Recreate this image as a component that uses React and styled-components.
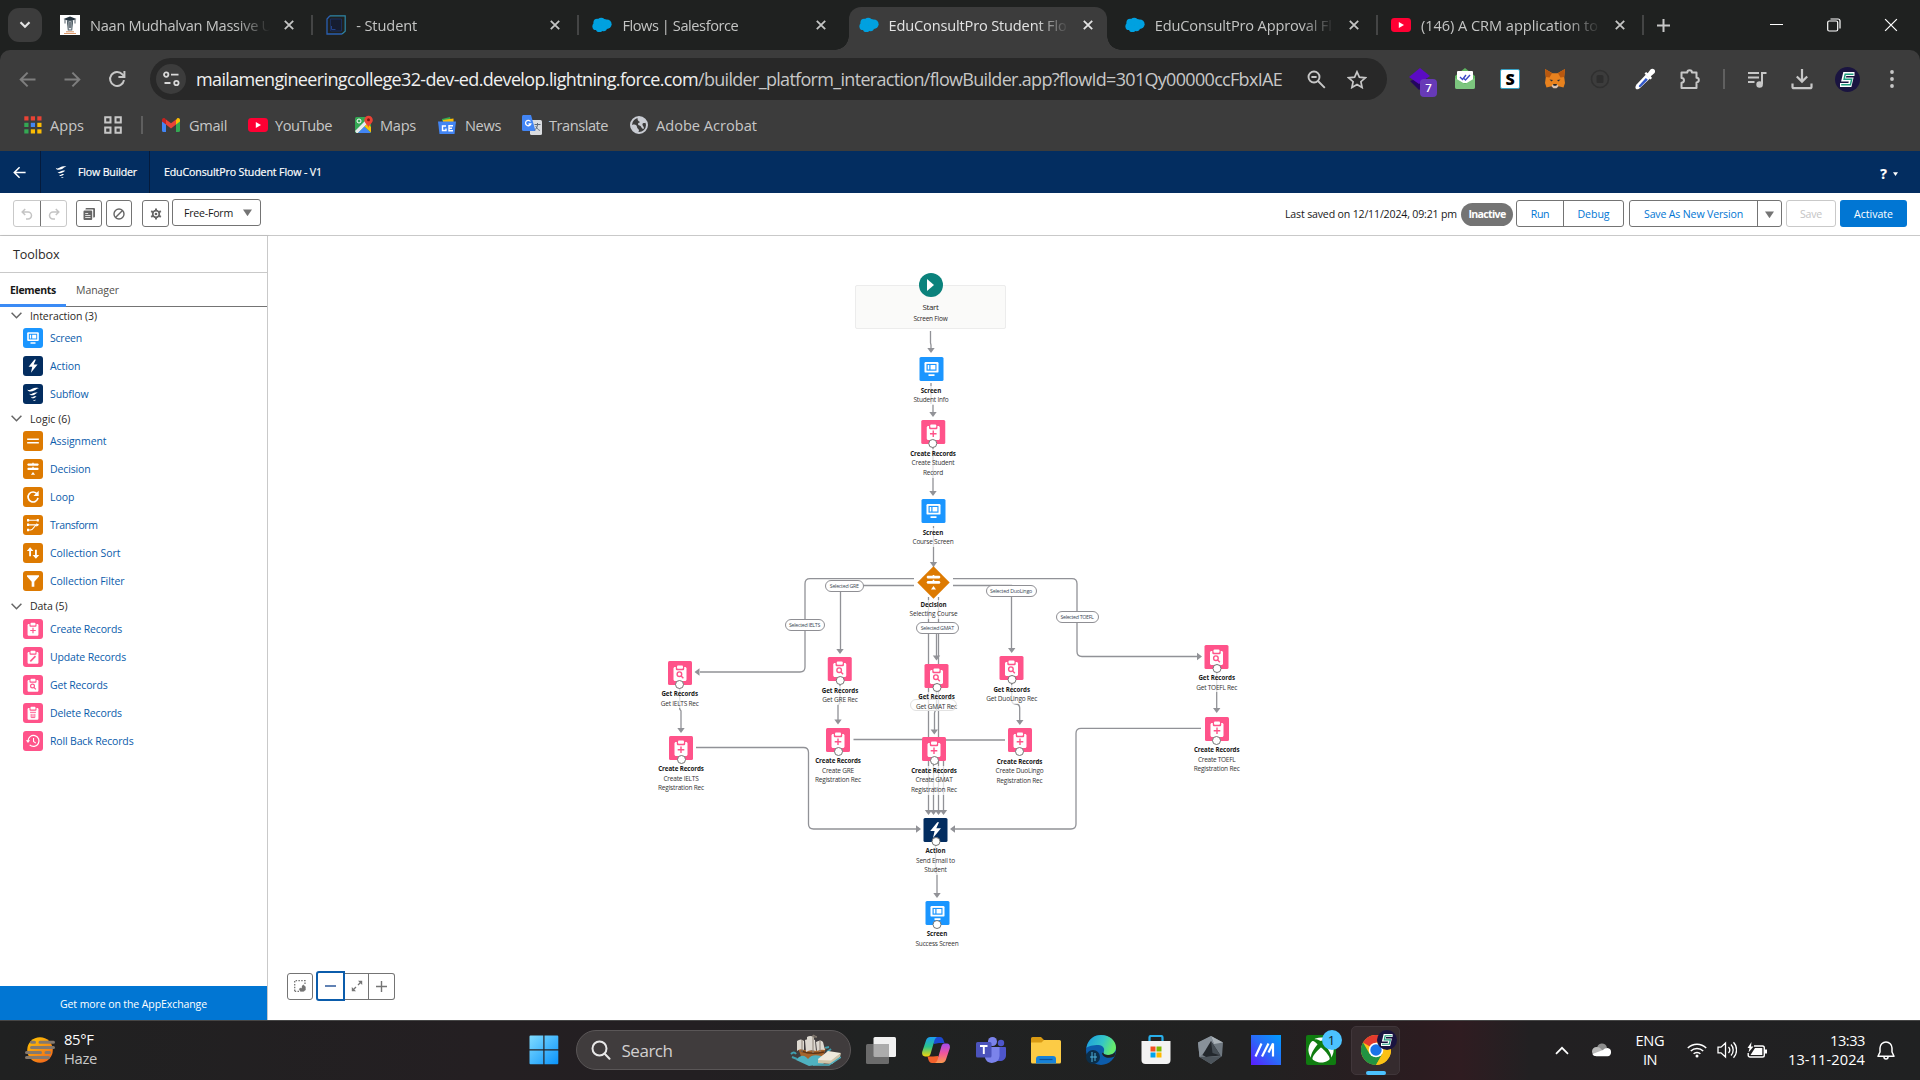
import React, { useLayoutEffect, useRef, useState } from "react";
import styled, { createGlobalStyle, css } from "styled-components";
import { FaXbox } from "react-icons/fa";

const GlobalStyle = createGlobalStyle`
  *, *::before, *::after { box-sizing: border-box; }
  html, body { margin: 0; padding: 0; overflow: hidden; background: #fff; }
  body { font-family: "Open Sans", "Noto Sans", sans-serif; }
  svg { display: block; flex: none; }
`;

/* ---------- text set to a fixed measure ---------- */

const FitText = styled.span`
  display: block;
  flex: none;
  white-space: pre;
  width: max-content;
`;

/* Spreads or tightens the letters so a label takes exactly `w` pixels. */
function Fit({ w, children }) {
  const ref = useRef(null);
  const [spacing, setSpacing] = useState(0);
  useLayoutEffect(() => {
    const natural = ref.current.getBoundingClientRect().width;
    if (w) setSpacing((w - natural) / String(children).length);
  }, [w, children]);
  return (
    <FitText ref={ref} style={{ letterSpacing: `${spacing}px` }}>
      {children}
    </FitText>
  );
}

/* ---------- page ---------- */

const Page = styled.div`
  width: 1920px;
  height: 1080px;
  display: flex;
  flex-direction: column;
  overflow: hidden;
`;

/* ---------- browser chrome ---------- */

const TabStrip = styled.div`
  height: 50px;
  flex: none;
  display: flex;
  background: #1f2120;
  color: #c7c7c7;
`;

const TabSearch = styled.div`
  width: 34px;
  height: 34px;
  margin: 8px 4px 0 8px;
  border-radius: 11px;
  background: #3c3c3c;
  display: grid;
  place-items: center;
`;

const Tab = styled.div`
  width: 266.2px;
  height: 50px;
  padding: 0 0 0 14px;
  display: flex;
  align-items: center;
  position: relative;
  font-size: 14.6px;
  color: ${(p) => (p.$active ? "#e3e3e3" : "#c4c5c4")};
  ${(p) =>
    p.$divider &&
    css`
      &::after {
        content: "";
        position: absolute;
        right: -1px;
        top: 15px;
        width: 2px;
        height: 20px;
        background: #444545;
      }
    `}
  ${(p) =>
    p.$active &&
    css`
      &::before {
        content: "";
        position: absolute;
        left: 4px;
        right: 4px;
        top: 7px;
        bottom: 0;
        border-radius: 12px 12px 0 0;
        background: #3c3c3c;
      }
    `}
`;

const TabFoot = styled.i`
  position: absolute;
  bottom: 0;
  width: 14px;
  height: 14px;
  ${(p) =>
    p.$left
      ? "left: -10px; background: radial-gradient(circle at 0 0, transparent 13.5px, #3c3c3c 14px);"
      : "right: -10px; background: radial-gradient(circle at 100% 0, transparent 13.5px, #3c3c3c 14px);"}
`;

const TabIcon = styled.span`
  position: relative;
  width: 20px;
  height: 20px;
  margin-right: 10px;
`;

const TabTitle = styled.div`
  position: relative;
  width: 184px;
  overflow: hidden;
  mask-image: linear-gradient(90deg, #000 146px, transparent 180px);
`;

const TabClose = styled.span`
  position: relative;
  width: 20px;
  margin-left: 5px;
  display: grid;
  place-items: center;
`;

const NewTab = styled.div`
  width: 40px;
  display: grid;
  place-items: center;
`;

const WindowButtons = styled.div`
  margin-left: auto;
  display: flex;
`;

const WindowButton = styled.div`
  width: 57.5px;
  display: grid;
  place-items: center;
`;

const BrowserTop = styled.div`
  height: 101px;
  flex: none;
  background: #1f2120;
`;

const BrowserPanel = styled.div`
  height: 101px;
  background: #3c3c3c;
  border-radius: 10px 10px 0 0;
  color: #c7c7c7;
`;

const NavRow = styled.div`
  height: 58px;
  display: flex;
  align-items: center;
  padding-left: 4.5px;
`;

const NavSlot = styled.div`
  width: 45px;
  height: 42px;
  flex: none;
  display: grid;
  place-items: center;
`;

const Omnibox = styled.div`
  width: 1237px;
  height: 42px;
  margin: 0 10.5px 0 10.5px;
  border-radius: 21px;
  background: #282828;
  display: flex;
  align-items: center;
  padding-left: 6px;
  font-size: 18px;
`;

const SiteInfo = styled.div`
  width: 30px;
  height: 30px;
  border-radius: 50%;
  background: #3c3c3c;
  display: grid;
  place-items: center;
  margin-right: 10px;
`;

const UrlHost = styled.span`
  color: #f0f0f0;
`;

const UrlPath = styled.span`
  color: #c7c7c7;
  margin-right: 14px;
`;

const OmniIcon = styled.span`
  width: 40.5px;
  display: grid;
  place-items: center;
`;

const ToolDivider = styled.div`
  width: 22px;
  display: grid;
  place-items: center;
  &::before {
    content: "";
    width: 2px;
    height: 20px;
    background: #606060;
  }
`;

const BookmarkRow = styled.div`
  height: 43px;
  padding: 0 0 9px 24px;
  display: flex;
  align-items: center;
  font-size: 14.6px;
`;

const Bookmark = styled.div`
  margin-left: ${(p) => p.$ml}px;
  display: flex;
  align-items: center;
  gap: ${(p) => p.$gap}px;
`;

const BookmarkDivider = styled.div`
  width: 2px;
  height: 18px;
  margin-left: 19px;
  background: #5f5f5f;
`;

/* ---------- flow builder ---------- */

const BuilderHeader = styled.header`
  height: 42px;
  flex: none;
  display: flex;
  background: #032d60;
  color: #fff;
  font-size: 10.6px;
  -webkit-text-stroke: 0.2px;
`;

const HeaderCell = styled.div`
  width: ${(p) => p.$w}px;
  display: flex;
  align-items: center;
  padding-left: ${(p) => p.$pad}px;
  gap: ${(p) => p.$gap || 0}px;
  border-right: 1px solid #051b3c;
`;

const HeaderTitle = styled.div`
  display: flex;
  align-items: center;
  padding-left: 14px;
`;

const HelpMenu = styled.div`
  margin-left: auto;
  margin-right: 22px;
  display: flex;
  align-items: center;
  gap: 6px;
  padding-top: 3px;
  font-size: 14px;
  font-weight: 700;
`;

const BuilderBar = styled.div`
  height: 43px;
  flex: none;
  display: flex;
  align-items: flex-start;
  padding: 7px 13px 0;
  background: #fff;
  border-bottom: 1px solid #c9c9c9;
  font-size: 10.6px;
  color: #181818;
`;

const ButtonGroup = styled.div`
  height: 27px;
  margin-left: ${(p) => p.$ml || 0}px;
  display: flex;
  border: 1px solid ${(p) => (p.$muted ? "#c9c9c9" : "#747474")};
  border-radius: 3px;
  background: #fff;
`;

const GroupButton = styled.div`
  width: ${(p) => p.$w}px;
  padding-top: ${(p) => p.$drop || 0}px;
  display: grid;
  place-items: center;
  color: ${(p) => p.$color || "#0176d3"};
  & + & {
    border-left: 1px solid ${(p) => (p.$muted ? "#c9c9c9" : "#747474")};
  }
`;

const ModeSelect = styled.div`
  width: 89px;
  height: 27px;
  margin: -1px 0 0 3px;
  padding: 0 8px 0 11px;
  display: flex;
  align-items: center;
  justify-content: space-between;
  border: 1px solid #747474;
  border-radius: 3px;
`;

const SavedInfo = styled.div`
  height: 28px;
  margin-left: auto;
  display: flex;
  align-items: center;
  gap: 4px;
`;

const StatusPill = styled.span`
  width: 52px;
  height: 23px;
  border-radius: 12px;
  background: #747474;
  color: #fff;
  font-weight: 700;
  display: grid;
  place-items: center;
`;

const ActivateButton = styled.div`
  width: 67px;
  height: 27px;
  margin-left: 4px;
  border-radius: 3px;
  background: #0176d3;
  color: #fff;
  display: grid;
  place-items: center;
`;

const Workspace = styled.div`
  height: 784px;
  flex: none;
  display: flex;
`;

const Toolbox = styled.aside`
  width: 268px;
  display: flex;
  flex-direction: column;
  border-right: 1px solid #c9c9c9;
  box-shadow: 1px 0 2px rgba(0, 0, 0, 0.16);
  font-size: 10.5px;
  color: #2b2826;
`;

const ToolboxTitle = styled.div`
  height: 37px;
  padding: 1px 0 0 13px;
  display: flex;
  align-items: center;
  border-bottom: 1px solid #c9c9c9;
  font-size: 12.6px;
`;

const ToolboxTabs = styled.div`
  height: 34px;
  display: flex;
  border-bottom: 1px solid #747474;
`;

const ToolboxTab = styled.div`
  height: 34px;
  padding: 0 10px;
  display: flex;
  align-items: center;
  color: ${(p) => (p.$active ? "#181818" : "#514f4d")};
  font-weight: ${(p) => (p.$active ? 700 : 400)};
  border-bottom: ${(p) => (p.$active ? "3px solid #3b8bf5" : "none")};
  border-top: ${(p) => (p.$active ? "3px solid transparent" : "none")};
`;

const ToolGroup = styled.div`
  padding-bottom: ${(p) => p.$pb}px;
`;

const GroupHeader = styled.div`
  height: 17px;
  padding-left: 11px;
  display: flex;
  align-items: center;
  gap: 8px;
`;

const ToolItem = styled.div`
  height: 28px;
  padding-left: 23px;
  display: flex;
  align-items: center;
  gap: 7px;
  color: #0b5cab;
`;

const IconTile = styled.span`
  width: ${(p) => p.$size}px;
  height: ${(p) => p.$size}px;
  flex: none;
  border-radius: ${(p) => (p.$size > 22 ? 1.5 : 3)}px;
  background: ${(p) => p.$bg};
  color: ${(p) => p.$bg};
`;

const ExchangeBar = styled.div`
  height: 34px;
  padding-top: 2px;
  margin-top: auto;
  background: #0176d3;
  color: #fff;
  display: grid;
  place-items: center;
`;

const Canvas = styled.main`
  width: 1652px;
  position: relative;
  background: #fff;
`;

const Edges = styled.svg`
  position: absolute;
  inset: 0;
`;

const StartCard = styled.div`
  position: absolute;
  left: 587px;
  top: 49px;
  width: 151px;
  height: 43.5px;
  border: 1px solid #ececec;
  border-radius: 2px;
  background: #fafaf9;
  display: flex;
  flex-direction: column;
  align-items: center;
  color: #2b2826;
  font-size: 6.5px;
  line-height: 12px;
`;

const StartBadge = styled.span`
  width: 24px;
  height: 24px;
  margin: -13px 0 4px;
  border-radius: 50%;
  background: #0b827c;
  display: grid;
  place-items: center;
`;

const StartName = styled.span`
  font-size: 8px;
`;

const Node = styled.div`
  position: absolute;
  left: ${(p) => p.$x - 268}px;
  top: ${(p) => p.$y - 236}px;
  transform: translateX(-50%);
  display: flex;
  flex-direction: column;
  align-items: center;
`;

const NodeText = styled.div`
  display: flex;
  flex-direction: column;
  align-items: center;
  margin-top: ${(p) => p.$gap}px;
  background: rgba(255, 255, 255, 0.7);
  color: #333;
  font-size: 6.5px;
  line-height: 9.7px;
`;

const NodeKind = styled.strong`
  color: #181818;
  font-size: 6.2px;
  font-weight: 700;
`;

const Connector = styled.span`
  position: absolute;
  top: 19px;
  width: 9px;
  height: 9px;
  border: 1px solid #747474;
  border-radius: 50%;
  background: #fff;
`;

const Diamond = styled.span`
  width: 33px;
  height: 33px;
  display: block;
`;

const EdgePill = styled.span`
  position: absolute;
  left: ${(p) => p.$x - 268}px;
  top: ${(p) => p.$y - 236}px;
  width: ${(p) => p.$w}px;
  height: 12px;
  border: 1px solid ${(p) => (p.$faint ? "#e2e2e2" : "#8f8f94")};
  border-radius: 6px;
  background: ${(p) => (p.$faint ? "transparent" : "#fff")};
  color: #3c4a58;
  font-size: 5.3px;
  line-height: 10px;
  display: flex;
  justify-content: center;
`;

const ZoomBar = styled.div`
  position: absolute;
  left: 19px;
  top: 735px;
  height: 30px;
  display: flex;
  align-items: center;
`;

const ZoomButton = styled.div`
  width: ${(p) => p.$w}px;
  height: ${(p) => (p.$focus ? 30 : 27)}px;
  margin-right: ${(p) => p.$mr || 0}px;
  border: ${(p) => (p.$focus ? "2px solid #0b5cab" : "1px solid #747474")};
  border-left-width: ${(p) => (p.$joined ? 0 : p.$focus ? 2 : 1)}px;
  border-radius: ${(p) => p.$radius};
  display: grid;
  place-items: center;
  color: #747474;
`;

/* ---------- taskbar ---------- */

const Taskbar = styled.footer`
  height: 60px;
  flex: none;
  display: flex;
  align-items: center;
  padding-bottom: 1px;
  border-top: 1px solid #464646;
  color: #fff;
  background: linear-gradient(
    90deg,
    #202121 0,
    #241f22 480px,
    #231f22 700px,
    #202222 860px,
    #212121 1250px,
    #2b1c20 1420px,
    #2f1c21 1460px,
    #222022 1530px,
    #202122 1920px
  );
`;

const Weather = styled.div`
  width: 516.5px;
  padding-left: 25px;
  display: flex;
  align-items: center;
  gap: 9px;
  font-size: 14.8px;
  line-height: 19.5px;
`;

const WeatherText = styled.div`
  margin-top: -2px;
`;

const Condition = styled.div`
  color: #c8c8c8;
`;

const TaskSlot = styled.div`
  position: relative;
  width: 55px;
  height: 49px;
  display: grid;
  place-items: center;
`;

const SearchBox = styled.div`
  width: 275px;
  height: 40px;
  margin: 0 2.5px 0 4px;
  border-radius: 20px;
  border: 1px solid #5a5657;
  background: #403c3d;
  display: flex;
  align-items: center;
  padding: 0 9px 0 14px;
  color: #d2d0d0;
  font-size: 17px;
`;

const SearchLabel = styled.span`
  margin: 0 auto 0 11px;
`;

const ActiveApp = styled.div`
  position: relative;
  width: 49px;
  height: 49px;
  border-radius: 5px;
  background: #352b2e;
  border: 1px solid #40363a;
  display: grid;
  place-items: center;
  &::after {
    content: "";
    position: absolute;
    left: 14px;
    bottom: -1px;
    width: 20px;
    height: 4px;
    border-radius: 2px;
    background: #4cc2ff;
  }
`;

const AppBadge = styled.span`
  position: absolute;
  left: 25px;
  top: 3px;
`;

const XboxTile = styled.span`
  width: 30px;
  height: 30px;
  border-radius: 2px;
  background: #107c10;
  display: grid;
  place-items: center;
`;

const CountBadge = styled.span`
  position: absolute;
  left: 28.5px;
  top: 4px;
  width: 20px;
  height: 20px;
  border-radius: 50%;
  background: #4cc2ff;
  color: #122;
  font-size: 13px;
  line-height: 20px;
  text-align: center;
`;

const ExtBadge = styled.span`
  position: absolute;
  left: 11px;
  top: 12px;
  width: 17px;
  height: 18px;
  border-radius: 4px;
  background: #673ab7;
  color: #fff;
  font-size: 11.5px;
  font-weight: 600;
  line-height: 18px;
  text-align: center;
`;

const ExtIcon = styled.span`
  position: relative;
  width: 22px;
  height: 24px;
`;

const LetterMark = styled.span`
  width: 20px;
  height: 20px;
  border-radius: 2px;
  border: 1px solid #37a1c4;
  background: #fff;
  color: #000;
  font-size: 16px;
  font-weight: 800;
  line-height: 18px;
  text-align: center;
`;

const Tray = styled.div`
  margin-left: auto;
  display: flex;
  align-items: center;
  padding-right: 25px;
  font-size: 14.6px;
  line-height: 19.5px;
`;

const TrayItem = styled.div`
  width: ${(p) => p.$w}px;
  display: flex;
  flex-direction: column;
  align-items: ${(p) => p.$align || "center"};
`;

/* ---------- drawings ---------- */

const Close = ({ s = 10, w = 1.8, c = "currentColor" }) => (
  <svg width={s} height={s} viewBox="0 0 10 10" stroke={c} strokeWidth={w}>
    <path d="M.8 .8 9.2 9.2M9.2 .8 .8 9.2" />
  </svg>
);

const Cloud = () => (
  <svg width="20" height="20" viewBox="0 0 20 20" fill="#00a1e0">
    <circle cx="5.2" cy="7.6" r="3.8" />
    <circle cx="9.2" cy="6.6" r="3.8" />
    <circle cx="14.8" cy="9.2" r="4.8" />
    <circle cx="4" cy="11.4" r="3.6" />
    <circle cx="7.4" cy="13.4" r="3.6" />
    <circle cx="11.6" cy="12.8" r="3.4" />
    <circle cx="12" cy="7" r="3" />
  </svg>
);

const YouTube = () => (
  <svg width="20" height="20" viewBox="0 0 20 20">
    <rect y="3" width="20" height="14" rx="3.4" fill="#ff0033" />
    <path d="M7.8 7v6l5.2-3z" fill="#fff" />
  </svg>
);

const Graduate = () => (
  <svg width="20" height="20" viewBox="0 0 20 20">
    <rect width="20" height="20" fill="#fff" />
    <path d="M3.5 4 10 1.5 16.5 4 10 6.4z" fill="#25343f" />
    <path d="M7 5.3h6v3l-.8 7.2H7.8L7 8.3z" fill="#56646c" />
    <path d="M8.7 6.5h2.6v8H8.700z" fill="#e8ecef" />
    <path d="M10 7v6" stroke="#25343f" strokeWidth="1.2" />
    <path d="M5 4.500v4M15 4.500v4" stroke="#25343f" strokeWidth=".8" />
    <path d="M4 18.500h12M6 16.800h8" stroke="#d9986a" strokeWidth="1" />
  </svg>
);

const StudentMark = () => (
  <svg width="20" height="20" viewBox="0 0 20 20" fill="none">
    <path d="M4 .8h15.200v15.500L16 19" stroke="#2e86a6" strokeWidth="1.200" />
    <path d="M4.500 4h11v12h-11z" fill="#161d30" stroke="#1b2f5c" strokeWidth="1" />
    <path d="M4 .8 1 4v15h15" stroke="#2a5fb0" strokeWidth="1.300" />
    <path d="M5.500 11v3.500h4" stroke="#23438a" strokeWidth="1" />
  </svg>
);

const AvatarS = ({ s = 25 }) => (
  <svg width={s} height={s} viewBox="0 0 25 25">
    <circle cx="12.5" cy="12.5" r="12.5" fill="#1a1440" />
    <path d="M19.500 7H9.800l-1.300 5.500h7.700L14.900 18H5" fill="none" stroke="#fff" strokeWidth="3.800" />
    <path d="M18.500 7.200H10.200l-1.100 5.100h7.600L15.400 17.800H6.200" fill="none" stroke="#1f9d7e" strokeWidth="1.500" />
  </svg>
);

const Arrow = ({ flip, c = "#7e7e7e", s = 17 }) => (
  <svg width={s} height={s} viewBox="0 0 17 17" fill="none" stroke={c} strokeWidth="2" transform={flip ? "scale(-1 1)" : undefined}>
    <path d="M16.500 8.500H1.800M8.600 1.600 1.700 8.500l6.900 6.900" />
  </svg>
);

const Reload = () => (
  <svg width="18" height="18" viewBox="0 0 18 18" fill="none" stroke="#c7c7c7" strokeWidth="2">
    <path d="M16 10.200A7 7 0 1 1 14.400 4.400L16 6" />
    <path d="M16.400 1v6h-6" />
  </svg>
);

const Sliders = () => (
  <svg width="17" height="16" viewBox="0 0 17 16" fill="none" stroke="#d8d8d8" strokeWidth="1.800">
    <circle cx="3.200" cy="3.600" r="2.200" />
    <path d="M8 3.600h7.500M1.500 12h6" />
    <circle cx="13.400" cy="12" r="2.200" />
  </svg>
);

const ZoomOutIcon = () => (
  <svg width="19" height="19" viewBox="0 0 19 19" fill="none" stroke="#c7c7c7" strokeWidth="1.900">
    <circle cx="7" cy="7" r="5.500" />
    <path d="m11 11 6.800 6.800M4.400 7h5.200" />
  </svg>
);

const Star = () => (
  <svg width="20" height="19" viewBox="0 0 20 19" fill="none" stroke="#c7c7c7" strokeWidth="1.700">
    <path d="m10 1.800 2.400 5.400 5.900.6-4.400 3.900 1.200 5.800-5.100-3-5.100 3 1.200-5.800-4.400-3.900 5.900-.6z" />
  </svg>
);

const MailExt = () => (
  <svg width="22" height="22" viewBox="0 0 22 22">
    <path d="M11 0 21 8v11a2 2 0 0 1-2 2H3a2 2 0 0 1-2-2V8z" fill="#5fb660" />
    <rect x="3" y="3" width="16" height="12" rx="1" fill="#fff" />
    <path d="m6 9 2.500 2.500L12 7M10 10.500l1.500 1.400L16 7" stroke="#3b49c7" strokeWidth="1.400" fill="none" />
    <path d="m1 10 10 6 10-6v9a2 2 0 0 1-2 2H3a2 2 0 0 1-2-2z" fill="#7cc67e" />
  </svg>
);

const Fox = () => (
  <svg width="22" height="22" viewBox="0 0 22 22">
    <path d="m1 1 7.500 4.200h5L21 1l-.8 8 .8 6-1.500 4.500-5-1.300L12.600 20H9.400l-1.900-1.800-5 1.300L1 15l.8-6z" fill="#e8821e" />
    <path d="M1 1 8 5.300 5.500 9.500 1.800 9zM21 1l-7 4.300 2.500 4.200 3.700-.5z" fill="#b9580f" />
    <path d="m5.500 11.500 3.500.5-1.500 1.600zM16.500 11.500l-3.500.5 1.500 1.600z" fill="#2b2f3a" />
    <path d="m7.500 18 1.800-2h3.400l1.800 2-2 2.300h-3z" fill="#d7c1b3" />
    <path d="M9 16h4l-.6 1.800H9.600z" fill="#222" />
  </svg>
);

const Dropper = () => (
  <svg width="22" height="22" viewBox="0 0 22 22">
    <path d="M2 21c-1-1-.6-3 .5-4.500L12 6.500l4 4L6 20c-1.300 1.200-3 1.800-4 1z" fill="#fff" />
    <path d="M5 17.500 11.800 10l2 1.800-7 7c-1 .8-2.500.2-1.800-1.300z" fill="#3157c8" />
    <path d="m10.500 5.500 1.600-1.400 1.600 1.200L16.500 1.500c1-1.200 2.800-1 3.800 0s1.100 2.800 0 3.800l-3.500 3 1.200 1.600-1.500 1.500z" fill="#fff" />
  </svg>
);

const Puzzle = () => (
  <svg width="22" height="22" viewBox="0 0 22 22" fill="none" stroke="#c7c7c7" strokeWidth="2">
    <path d="M2.500 4.500h5.800a2.300 2.300 0 0 1 4.600 0h4.600v5.300a2.300 2.300 0 0 1 0 4.600v5.600h-15v-5.300c3.300 0 3.300-4.700 0-4.700z" strokeLinejoin="round" />
  </svg>
);

const Playlist = () => (
  <svg width="20" height="19" viewBox="0 0 20 19" fill="none" stroke="#c7c7c7" strokeWidth="2">
    <path d="M1 3h11M1 7.500h11M1 12h6.500M15 14V3h4.500" />
    <circle cx="12.600" cy="14.500" r="2.300" fill="#c7c7c7" />
  </svg>
);

const Download = () => (
  <svg width="22" height="22" viewBox="0 0 22 22" fill="none" stroke="#c7c7c7" strokeWidth="2.200">
    <path d="M11 1v12M5.800 8.500 11 13.600l5.200-5.100M1.500 15.500v3.500a1.200 1.200 0 0 0 1.200 1.200h16.600a1.200 1.200 0 0 0 1.200-1.200v-3.500" />
  </svg>
);

const AppsDots = () => {
  const colors = ["#ea4335", "#ea4335", "#ea4335", "#34a853", "#4285f4", "#fbbc04", "#34a853", "#fbbc04", "#fbbc04"];
  return (
    <svg width="18" height="18" viewBox="0 0 18 18">
      {colors.map((c, i) => (
        <rect key={i} x={(i % 3) * 6.5 + 0.3} y={Math.floor(i / 3) * 6.5 + 0.3} width="4.2" height="4.2" fill={c} />
      ))}
    </svg>
  );
};

const GridIcon = () => (
  <svg width="18" height="18" viewBox="0 0 18 18" fill="none" stroke="#c7c7c7" strokeWidth="2">
    <path d="M1.200 1.200h5.300v5.300H1.200zM11.500 1.200h5.300v5.300h-5.300zM1.200 11.500h5.300v5.300H1.200zM11.500 11.500h5.300v5.300h-5.300z" />
  </svg>
);

const Gmail = () => (
  <svg width="18" height="18" viewBox="0 0 18 18">
    <path d="M0 5v9.800c0 .7.500 1.200 1.200 1.200H4V7z" fill="#4285f4" />
    <path d="M14 7v9h2.800c.7 0 1.200-.5 1.200-1.200V5z" fill="#34a853" />
    <path d="M14 4v4.600l4-3V4c0-1.700-1.800-2.500-3-1.500z" fill="#fbbc04" />
    <path d="M4 8.600V3.400l5 3.800 5-3.800v5.200l-5 3.800z" fill="#ea4335" />
    <path d="M0 4v1.600l4 3V3.400L3 2.500C1.800 1.500 0 2.300 0 4z" fill="#c5221f" />
  </svg>
);

const Maps = () => (
  <svg width="18" height="20" viewBox="0 0 18 20">
    <rect y="2" width="16" height="16" rx="1.500" fill="#34a853" />
    <path d="M0 16 13 3h3v2L3 18H1.500z" fill="#e8eaed" />
    <path d="M3 18 9.500 11.500 16 18z" fill="#4285f4" />
    <path d="m9.500 11.500 3-3L16 12v5.500z" fill="#fbbc04" />
    <circle cx="4" cy="6" r="2" fill="none" stroke="#fff" strokeWidth="1" />
    <path d="M13.300 13c0-3-4-4.400-4-8a4.200 4.200 0 0 1 8.500 0c0 3.600-4.500 5-4.500 8z" fill="#ea4335" />
    <circle cx="13.500" cy="4.800" r="1.500" fill="#811411" />
  </svg>
);

const News = () => (
  <svg width="18" height="19" viewBox="0 0 18 19">
    <path d="m4 3 8-2 1 4H4z" fill="#34a853" />
    <path d="m5 4 10.500-1.500V7H5z" fill="#fbbc04" />
    <path d="M0 5.500h18L16.500 18h-15z" fill="#4285f4" />
    <path d="M8 10H4.500v4.500H8v-2M15 9.700h-4v5h4M11 12.200h3" stroke="#fff" strokeWidth="1.400" fill="none" />
  </svg>
);

const Translate = () => (
  <svg width="20" height="20" viewBox="0 0 20 20">
    <rect x="8" y="5" width="12" height="15" rx="1.500" fill="#dadce0" />
    <path d="M1.500 0H9l4.500 16h-12A1.500 1.500 0 0 1 0 14.500v-13C0 .7.700 0 1.500 0z" fill="#4285f4" />
    <path d="M8.500 6.500A2.700 2.700 0 1 0 8.800 9H6.500" fill="none" stroke="#fff" strokeWidth="1.300" />
    <path d="M12.500 9.500h6M15.500 8v1.500c0 3-1.500 4.500-3 5.500M13.800 11c.8 2 2 3.500 4 4.500" fill="none" stroke="#5f6b7a" strokeWidth="1" />
  </svg>
);

const Globe = () => (
  <svg width="18" height="18" viewBox="0 0 18 18">
    <circle cx="9" cy="9" r="8" fill="none" stroke="#c9ccd3" strokeWidth="2" />
    <path d="M2 9c3-1 5 0 5 2s2 1.500 2 3.500L8 17C4 16.500 1.500 13 2 9zM8 1.500c4-1 7 1 8.500 5-1.500 1-3.500-.5-4 1.500S15 11 13.500 13c-2 0-2-3-4-3.500S7.500 7 9.500 6.500 6 5 8 1.500z" fill="#c9ccd3" />
  </svg>
);

const Caret = ({ w = 8, c = "#747474" }) => (
  <svg width={w} height={w * 0.8} viewBox="0 0 10 8" fill={c}>
    <path d="M0 .5h10L5 8z" />
  </svg>
);

const Swoosh = ({ s = 24, c = "#fff" }) => (
  <svg width={s} height={s} viewBox="0 0 24 24" fill={c}>
    <path d="M5 6.200C6.500 8.200 8.500 7 11 5.600c2.500-1.300 5-1.600 8.200-.6-3 .2-3.500 1.800-5.700 2.900C10.500 9.300 6 10 5 6.200z" />
    <path d="M7.500 11.500c1.200 1.300 2.500.7 4.300-.4 1.800-1 3.800-1.300 6-.6-2 .3-2.300 1.500-4 2.300-2.400 1.100-5.600 1.300-6.300-1.300z" />
    <path d="M9.500 15.600c1 .8 1.800.4 3-.3 1.300-.6 2.500-.7 3.900-.2-1.300.3-1.500 1.200-2.700 1.700-1.700.8-3.800.6-4.200-1.200zM12 19.200c1 .3 1.800-.5 3.500-.4-.8 1.500-2.900 1.900-3.500.4z" />
  </svg>
);

const Clipboard = ({ children }) => (
  <>
    <path d="M7 6h10c.8 0 1.500.6 1.500 1.500v11c0 .8-.7 1.500-1.500 1.500H7c-.8 0-1.500-.7-1.500-1.500v-11C5.500 6.600 6.200 6 7 6z" fill="#fff" />
    <rect x="7.800" y="4" width="8.400" height="5.200" rx="1.200" fill="currentColor" />
    <rect x="9" y="4.600" width="6" height="3.200" rx="1" fill="#fff" />
    <g fill="none" stroke="currentColor" strokeWidth="1.400">
      {children}
    </g>
  </>
);

const glyphs = {
  screen: (
    <>
      <rect x="5" y="5" width="14" height="10.600" rx="1.200" fill="#fff" />
      <rect x="7" y="6.900" width="10" height="6.800" fill="currentColor" />
      <path d="M8.200 8h1.600v4.600H8.200zM11 8h4.900v4.600H11zM9 17.200h6V19H9z" fill="#fff" />
    </>
  ),
  action: <path d="M13.800 4.300 6.700 13h4.400l-1.600 7 8-9.700h-4.700l2.700-6z" fill="#fff" />,
  assignment: <path d="M5 9h14v1.800H5zM5 13.300h14v1.800H5z" fill="#fff" />,
  decision: (
    <path d="M11.200 4.500h1.600v.8h5.200l1 1.300-1 1.400H6L5 6.600l1-1.300h5.200zM11.200 9.200h1.600v1.300H18l1 1.400-1 1.400H6l-1-1.400 1-1.400h5.200zM12 15.500l2.500 3.500h-5z" fill="#fff" />
  ),
  loop: (
    <>
      <path d="M17 8.500A6 6 0 1 0 18 13" fill="none" stroke="#fff" strokeWidth="2" />
      <path d="M18.800 4.500v6.300h-6.300z" fill="#fff" />
    </>
  ),
  transform: (
    <>
      <path d="M6 6.300h12M6 11.800h12M6.500 18h2.500c4 0 4-6 8-6" fill="none" stroke="#fff" strokeWidth="1.400" />
      <path d="M4.800 4.800h2.500v3H4.800zM16.500 4.800H19v3h-2.500zM4.800 10.300h2.500v3H4.800zM16 9.800l3.500 2-3.500 2.200zM4.800 16.500h2.500v3H4.800z" fill="#fff" />
    </>
  ),
  sort: <path d="M8.500 5l4 4.500H9.600V16H7.400V9.500H4.600zM15.500 19l-4-4.500h2.900V8h2.200v6.500h2.900z" fill="#fff" />,
  filter: <path d="M4.800 5h14.400v1.500L13.600 13v6h-3.200v-6L4.800 6.500z" fill="#fff" />,
  create: (
    <Clipboard>
      <path d="M12 10.500v6.600M8.700 13.800h6.600" />
    </Clipboard>
  ),
  update: (
    <Clipboard>
      <path d="m8.800 17.200 6.200-6.200" strokeWidth="1.900" />
    </Clipboard>
  ),
  get: (
    <Clipboard>
      <circle cx="11.400" cy="13.200" r="2.300" />
      <path d="m13.100 14.900 2.300 2.300" />
    </Clipboard>
  ),
  del: (
    <Clipboard>
      <path d="M8.500 11.200h7M9.800 13v4.500h4.400V13M12 13v4" strokeWidth="1.100" />
    </Clipboard>
  ),
  rollback: (
    <>
      <path d="M6 12a6.600 6.600 0 1 1 2 4.700" fill="none" stroke="#fff" strokeWidth="1.500" />
      <path d="M3.500 11.200h5L6 14.300zM12 8.500h1.300v3.800l2.500 1.800-.8 1-3-2.200z" fill="#fff" />
    </>
  ),
};

const palette = {
  screen: "#1b96ff",
  action: "#032d60",
  subflow: "#032d60",
  create: "#ff538a",
  update: "#ff538a",
  get: "#ff538a",
  del: "#ff538a",
  rollback: "#ff538a",
};

function Tile({ kind, size }) {
  return (
    <IconTile $size={size} $bg={palette[kind] || "#dd7a01"}>
      {kind === "subflow" ? (
        <Swoosh s={size} />
      ) : (
        <svg width={size} height={size} viewBox="0 0 24 24">
          {glyphs[kind]}
        </svg>
      )}
    </IconTile>
  );
}

/* ---------- data ---------- */

const tabs = [
  { icon: <Graduate />, title: "Naan Mudhalvan Massive U", w: 182, divider: true },
  { icon: <StudentMark />, title: "- Student", w: 61, divider: true },
  { icon: <Cloud />, title: "Flows | Salesforce", w: 116 },
  { icon: <Cloud />, title: "EduConsultPro Student Flo", w: 178, active: true },
  { icon: <Cloud />, title: "EduConsultPro Approval Fl", w: 177, divider: true },
  { icon: <YouTube />, title: "(146) A CRM application to", w: 177, divider: true },
];

const bookmarks = [
  { icon: <Gmail />, name: "Gmail", w: 38, ml: 19, gap: 9 },
  { icon: <YouTube />, name: "YouTube", w: 57, ml: 21, gap: 7 },
  { icon: <Maps />, name: "Maps", w: 36, ml: 23, gap: 7 },
  { icon: <News />, name: "News", w: 36, ml: 22, gap: 9 },
  { icon: <Translate />, name: "Translate", w: 59, ml: 21, gap: 7 },
  { icon: <Globe />, name: "Adobe Acrobat", w: 101, ml: 22, gap: 8 },
];

const toolGroups = [
  {
    name: "Interaction (3)",
    w: 67,
    pb: 2,
    items: [["screen", "Screen", 32], ["action", "Action", 30.5], ["subflow", "Subflow", 38.5]],
  },
  {
    name: "Logic (6)",
    w: 40.5,
    pb: 2.5,
    items: [
      ["assignment", "Assignment", 56.5],
      ["decision", "Decision", 40.5],
      ["loop", "Loop", 24.5],
      ["transform", "Transform", 47.5],
      ["sort", "Collection Sort", 70.5],
      ["filter", "Collection Filter", 74.5],
    ],
  },
  {
    name: "Data (5)",
    w: 37.5,
    pb: 0,
    items: [
      ["create", "Create Records", 72],
      ["update", "Update Records", 76],
      ["get", "Get Records", 57.5],
      ["del", "Delete Records", 72],
      ["rollback", "Roll Back Records", 83.5],
    ],
  },
];

const nodeNames = {
  screen: ["Screen", 20.5],
  create: ["Create Records", 45.5],
  get: ["Get Records", 36.5],
  action: ["Action", 20],
};

const nodes = [
  { kind: "screen", x: 931, y: 356.5, lines: [["Student Info", 35]], gap: 5, open: true },
  { kind: "create", x: 933, y: 420, lines: [["Create Student", 43], ["Record", 20]] },
  { kind: "screen", x: 933, y: 498.5, lines: [["Course Screen", 41]], gap: 5, open: true },
  { kind: "get", x: 679.7, y: 660.5, lines: [["Get IELTS Rec", 38]] },
  { kind: "get", x: 840, y: 657, lines: [["Get GRE Rec", 35.5]] },
  { kind: "get", x: 936.5, y: 663.5, lines: [["Get GMAT Rec", 41]] },
  { kind: "get", x: 1011.7, y: 656, lines: [["Get DuoLingo Rec", 51]] },
  { kind: "get", x: 1216.7, y: 644.5, lines: [["Get TOEFL Rec", 41]] },
  { kind: "create", x: 681, y: 735.5, lines: [["Create IELTS", 35], ["Registration Rec", 46]] },
  { kind: "create", x: 838, y: 727.5, lines: [["Create GRE", 32], ["Registration Rec", 46]] },
  { kind: "create", x: 934, y: 737, lines: [["Create GMAT", 37], ["Registration Rec", 46]] },
  { kind: "create", x: 1019.5, y: 728, lines: [["Create DuoLingo", 48], ["Registration Rec", 46]] },
  { kind: "create", x: 1216.7, y: 716.5, lines: [["Create TOEFL", 37.5], ["Registration Rec", 46]] },
  { kind: "action", x: 935.5, y: 817.5, lines: [["Send Email to", 39], ["Student", 22.5]] },
  { kind: "screen", x: 937, y: 900.5, lines: [["Success Screen", 43]] },
];

const pills = [
  { text: "Selected GRE", tw: 29, x: 825, y: 580, w: 38.5 },
  { text: "Selected IELTS", tw: 31, x: 784.5, y: 619, w: 40 },
  { text: "Selected GMAT", tw: 33, x: 916, y: 622, w: 42.5 },
  { text: "Selected DuoLingo", tw: 42, x: 985.5, y: 585, w: 51 },
  { text: "Selected TOEFL", tw: 33, x: 1055.5, y: 611, w: 43 },
];

const edgePaths = [
  "M930.5 331v12l.5 2v5",
  "M931 383v21M933 404v8",
  "M933 446v46",
  "M933.5 526v41",
  "M914 578.7H810q-5 0-5 5V667q0 5-5 5H700",
  "M914 585.500H840.500V650",
  "M953 578.700h119q5 0 5 5V651.500q0 5 5 5H1198",
  "M953 585.500h58.500V650",
  "M928.500 597V810",
  "M938.500 597V810",
  "M936.500 634v24",
  "M933.500 762v48M943.500 752v58",
  "M679.700 688v21l1.300 2v19",
  "M840 684v19l-2 2v16",
  "M936.500 690v20q-2 1-2 3v18",
  "M1011.700 683v17q0 4 4 4t4 4v13",
  "M1216.700 672v38",
  "M696 747.500H803.500q5 0 5 5V824q0 5 5 5H917",
  "M1201 728.300H1081q-5 0-5 5V824q0 5-5 5H955",
  "M853.500 739.500H922M946 740H1005",
  "M935.500 845v27l1.500 2v20",
];

const arrowsDown = [
  [931, 353], [933, 417], [933, 496], [933.5, 567], [840, 654], [1011.7, 653], [936.5, 660.5],
  [681, 733], [838, 724.5], [934.3, 734.5], [1019.8, 725], [1216.7, 713],
  [928.5, 815], [933.5, 815], [938.5, 815], [943.5, 815], [937, 898],
];

/* ---------- sections ---------- */

function Browser() {
  return (
    <>
      <TabStrip>
        <TabSearch>
          <svg width="12" height="8" viewBox="0 0 12 8" fill="none" stroke="#e3e3e3" strokeWidth="2.200">
            <path d="m1.500 1.300 4.500 4.500 4.500-4.500" />
          </svg>
        </TabSearch>
        {tabs.map((t) => (
          <Tab key={t.title} $active={t.active} $divider={t.divider}>
            {t.active && <TabFoot $left />}
            {t.active && <TabFoot />}
            <TabIcon>{t.icon}</TabIcon>
            <TabTitle>
              <Fit w={t.w}>{t.title}</Fit>
            </TabTitle>
            <TabClose>
              <Close />
            </TabClose>
          </Tab>
        ))}
        <NewTab>
          <svg width="13" height="13" viewBox="0 0 13 13" stroke="#c7c7c7" strokeWidth="2">
            <path d="M6.500 0v13M0 6.500h13" />
          </svg>
        </NewTab>
        <WindowButtons>
          <WindowButton>
            <svg width="13" height="2" viewBox="0 0 13 2"><path d="M0 .5h13" stroke="#fff" /></svg>
          </WindowButton>
          <WindowButton>
            <svg width="14" height="14" viewBox="0 0 14 14" fill="none" stroke="#fff" strokeWidth="1.200">
              <rect x=".7" y="3" width="10" height="10" rx="1.500" />
              <path d="M3.500 1h7.500a2 2 0 0 1 2 2v7.500" />
            </svg>
          </WindowButton>
          <WindowButton>
            <Close s={14} w={0.9} c="#fff" />
          </WindowButton>
        </WindowButtons>
      </TabStrip>
      <BrowserTop>
        <BrowserPanel>
          <NavRow>
            <NavSlot><Arrow /></NavSlot>
            <NavSlot><Arrow flip /></NavSlot>
            <NavSlot><Reload /></NavSlot>
            <Omnibox>
              <SiteInfo><Sliders /></SiteInfo>
              <UrlHost><Fit w={502}>mailamengineeringcollege32-dev-ed.develop.lightning.force.com</Fit></UrlHost>
              <UrlPath><Fit w={584}>/builder_platform_interaction/flowBuilder.app?flowId=301Qy00000ccFbxIAE</Fit></UrlPath>
              <OmniIcon><ZoomOutIcon /></OmniIcon>
              <OmniIcon><Star /></OmniIcon>
            </Omnibox>
            <NavSlot>
              <ExtIcon>
                <svg width="22" height="24" viewBox="0 0 22 24">
                  <path d="m1 14 9 9 8-7V8z" fill="#23065e" />
                  <path d="M11 1 21 9 10 17 0 10z" fill="#5b0bc4" />
                </svg>
                <ExtBadge>7</ExtBadge>
              </ExtIcon>
            </NavSlot>
            <NavSlot><MailExt /></NavSlot>
            <NavSlot><LetterMark>S</LetterMark></NavSlot>
            <NavSlot><Fox /></NavSlot>
            <NavSlot>
              <svg width="20" height="20" viewBox="0 0 20 20" fill="none">
                <circle cx="10" cy="10" r="8.500" stroke="#303030" strokeWidth="1.600" />
                <rect x="6.500" y="6" width="7" height="8" rx="1.500" fill="#2e2e2e" />
              </svg>
            </NavSlot>
            <NavSlot><Dropper /></NavSlot>
            <NavSlot><Puzzle /></NavSlot>
            <ToolDivider />
            <NavSlot><Playlist /></NavSlot>
            <NavSlot><Download /></NavSlot>
            <NavSlot><AvatarS /></NavSlot>
            <NavSlot>
              <svg width="4" height="18" viewBox="0 0 4 18" fill="#c7c7c7">
                <circle cx="2" cy="2" r="1.900" /><circle cx="2" cy="9" r="1.900" /><circle cx="2" cy="16" r="1.900" />
              </svg>
            </NavSlot>
          </NavRow>
          <BookmarkRow>
            <Bookmark $ml={0} $gap={8}><AppsDots /><Fit w={34}>Apps</Fit></Bookmark>
            <Bookmark $ml={20} $gap={0}><GridIcon /></Bookmark>
            <BookmarkDivider />
            {bookmarks.map((b) => (
              <Bookmark key={b.name} $ml={b.ml} $gap={b.gap}>
                {b.icon}
                <Fit w={b.w}>{b.name}</Fit>
              </Bookmark>
            ))}
          </BookmarkRow>
        </BrowserPanel>
      </BrowserTop>
    </>
  );
}

function BuilderTop() {
  return (
    <>
      <BuilderHeader>
        <HeaderCell $w={41} $pad={13}><Arrow c="#fff" s={13} /></HeaderCell>
        <HeaderCell $w={109} $pad={11} $gap={8}>
          <Swoosh s={18} />
          <Fit w={59}>Flow Builder</Fit>
        </HeaderCell>
        <HeaderTitle><Fit w={158}>EduConsultPro Student Flow - V1</Fit></HeaderTitle>
        <HelpMenu>?<Caret w={5} c="#fff" /></HelpMenu>
      </BuilderHeader>
      <BuilderBar>
        <ButtonGroup $muted>
          <GroupButton $w={26} $muted>
            <svg width="12" height="12" viewBox="0 0 12 12" fill="none" stroke="#c4c4c4" strokeWidth="1.500">
              <path d="M1.500 4h5.500a3.400 3.400 0 0 1 0 7H5M4.200 1 1.200 4l3 3" />
            </svg>
          </GroupButton>
          <GroupButton $w={26} $muted>
            <svg width="12" height="12" viewBox="0 0 12 12" fill="none" stroke="#c4c4c4" strokeWidth="1.500">
              <path d="M10.500 4H5a3.400 3.400 0 0 0 0 7h2M7.800 1l3 3-3 3" />
            </svg>
          </GroupButton>
        </ButtonGroup>
        <ButtonGroup $ml={9}>
          <GroupButton $w={24}>
            <svg width="12" height="12" viewBox="0 0 12 12" fill="#666">
              <path d="M3.500 0H11a1 1 0 0 1 1 1v7.500a1 1 0 0 1-1 1h-.8v-8H2.500V1a1 1 0 0 1 1-1z" />
              <path d="M1.500 2.500h6.700a1 1 0 0 1 1 1V11a1 1 0 0 1-1 1H1.500a1 1 0 0 1-1-1V3.500a1 1 0 0 1 1-1z" />
              <path d="M2.200 5.500h3M2.200 7.500h5.300M2.200 9.500h5.300" stroke="#fff" strokeWidth=".8" />
            </svg>
          </GroupButton>
        </ButtonGroup>
        <ButtonGroup $ml={4}>
          <GroupButton $w={24}>
            <svg width="12" height="12" viewBox="0 0 12 12" fill="none" stroke="#666" strokeWidth="1.400">
              <circle cx="6" cy="6" r="5" /><path d="m2.500 9.500 7-7" />
            </svg>
          </GroupButton>
        </ButtonGroup>
        <ButtonGroup $ml={10}>
          <GroupButton $w={25}>
            <svg width="12" height="12" viewBox="0 0 12 12" fill="none" stroke="#666">
              <path d="M6 .4v11.200M1.150 3.200l9.700 5.600M1.150 8.800l9.700-5.600" strokeWidth="2" />
              <circle cx="6" cy="6" r="3.300" strokeWidth="1.700" fill="#fff" />
              <circle cx="6" cy="6" r="1.300" fill="#666" stroke="none" />
            </svg>
          </GroupButton>
        </ButtonGroup>
        <ModeSelect><Fit w={49}>Free-Form</Fit><Caret w={9} /></ModeSelect>
        <SavedInfo>
          <Fit w={172}>Last saved on 12/11/2024, 09:21 pm</Fit>
          <StatusPill><Fit w={37}>Inactive</Fit></StatusPill>
        </SavedInfo>
        <ButtonGroup $ml={3}>
          <GroupButton $w={46}><Fit w={18.5}>Run</Fit></GroupButton>
          <GroupButton $w={60}><Fit w={32}>Debug</Fit></GroupButton>
        </ButtonGroup>
        <ButtonGroup $ml={5}>
          <GroupButton $w={127}><Fit w={99}>Save As New Version</Fit></GroupButton>
          <GroupButton $w={24} $drop={2}><Caret w={9} /></GroupButton>
        </ButtonGroup>
        <ButtonGroup $ml={4} $muted>
          <GroupButton $w={48} $color="#c4c4c4"><Fit w={22}>Save</Fit></GroupButton>
        </ButtonGroup>
        <ActivateButton><Fit w={39}>Activate</Fit></ActivateButton>
      </BuilderBar>
    </>
  );
}

function ToolboxPanel() {
  return (
    <Toolbox>
      <ToolboxTitle><Fit w={46.5}>Toolbox</Fit></ToolboxTitle>
      <ToolboxTabs>
        <ToolboxTab $active><Fit w={46}>Elements</Fit></ToolboxTab>
        <ToolboxTab><Fit w={43}>Manager</Fit></ToolboxTab>
      </ToolboxTabs>
      {toolGroups.map((g) => (
        <ToolGroup key={g.name} $pb={g.pb}>
          <GroupHeader>
            <svg width="11" height="7" viewBox="0 0 11 7" fill="none" stroke="#666" strokeWidth="1.500">
              <path d="m.6.8 4.900 5 4.900-5" />
            </svg>
            <Fit w={g.w}>{g.name}</Fit>
          </GroupHeader>
          {g.items.map(([kind, name, w]) => (
            <ToolItem key={name}>
              <Tile kind={kind} size={20} />
              <Fit w={w}>{name}</Fit>
            </ToolItem>
          ))}
        </ToolGroup>
      ))}
      <ExchangeBar><Fit w={147}>Get more on the AppExchange</Fit></ExchangeBar>
    </Toolbox>
  );
}

function FlowCanvas() {
  return (
    <Canvas>
      <Edges width="1652" height="784" viewBox="268 236 1652 784">
        <g fill="none" stroke="#919297" strokeWidth="1.300">
          {edgePaths.map((d) => <path key={d} d={d} />)}
        </g>
        <g fill="#919297">
          {arrowsDown.map(([x, y]) => <path key={`${x}-${y}`} d={`M${x - 3.7} ${y - 5}h7.4L${x} ${y}z`} />)}
          <path d="M694.500 672l5-3.700v7.400zM921 829l-5-3.700v7.400zM950 829l5-3.700v7.400zM1202 656.500l-5-3.700v7.400z" />
        </g>
      </Edges>
      <StartCard>
        <StartBadge>
          <svg width="9" height="12" viewBox="0 0 9 12"><path d="M1 0v12l7-6z" fill="#fff" /></svg>
        </StartBadge>
        <StartName><Fit w={16}>Start</Fit></StartName>
        <Fit w={34}>Screen Flow</Fit>
      </StartCard>
      <Node $x={933.5} $y={565.5}>
        <Diamond>
          <svg width="33" height="33" viewBox="0 0 33 33">
            <path d="M16.500.3 32.700 16.500 16.500 32.700.3 16.500z" fill="#dd7a01" />
            <g transform="translate(4.500 4.500)">{glyphs.decision}</g>
          </svg>
        </Diamond>
        <NodeText $gap={1}>
          <NodeKind><Fit w={26}>Decision</Fit></NodeKind>
          <Fit w={48}>Selecting Course</Fit>
        </NodeText>
      </Node>
      {pills.map((p) => (
        <EdgePill key={p.text} $x={p.x} $y={p.y} $w={p.w}><Fit w={p.tw}>{p.text}</Fit></EdgePill>
      ))}
      {nodes.map((n) => (
        <Node key={`${n.x}-${n.y}`} $x={n.x} $y={n.y}>
          <Tile kind={n.kind} size={24} />
          {!n.open && <Connector />}
          <NodeText $gap={n.gap || 4.5}>
            <NodeKind><Fit w={nodeNames[n.kind][1]}>{nodeNames[n.kind][0]}</Fit></NodeKind>
            {n.lines.map(([text, w]) => <Fit key={text} w={w}>{text}</Fit>)}
          </NodeText>
        </Node>
      ))}
      <EdgePill $x={910} $y={699} $w={47} $faint />
      <ZoomBar>
        <ZoomButton $w={26} $mr={3} $radius="3px">
          <svg width="12" height="12" viewBox="0 0 12 12" fill="none" stroke="#747474" strokeWidth="1.300">
            <path d="M.7 11V.7H11v4M.7 11.300H5" strokeDasharray="1.500 1.300" />
            <path d="m5 9 1.500-1 1.500.3V6l1.300-1.200 2.200 2V10l-2 1.600H6.500z" fill="#747474" strokeWidth=".3" />
          </svg>
        </ZoomButton>
        <ZoomButton $w={29} $focus $radius="3px 0 0 3px">
          <svg width="11" height="2" viewBox="0 0 11 2"><path d="M0 1h11" stroke="#0b3f8c" strokeWidth="1.300" /></svg>
        </ZoomButton>
        <ZoomButton $w={24} $joined $radius="0">
          <svg width="12" height="12" viewBox="0 0 12 12" fill="#747474" stroke="#747474" strokeWidth="1.300">
            <path d="m7 5 3-3M5 7l-3 3" />
            <path d="M7 .8h4.200V5zM.8 7v4.200H5z" stroke="none" />
          </svg>
        </ZoomButton>
        <ZoomButton $w={26} $joined $radius="0 3px 3px 0">
          <svg width="11" height="11" viewBox="0 0 11 11" stroke="#747474" strokeWidth="1.400"><path d="M5.500 0v11M0 5.500h11" /></svg>
        </ZoomButton>
      </ZoomBar>
    </Canvas>
  );
}

const HazeIcon = () => (
  <svg width="30" height="28" viewBox="0 0 30 28">
    <defs>
      <linearGradient id="sun" x1="0" y1="0" x2=".7" y2="1"><stop offset="0" stopColor="#ffc800" /><stop offset="1" stopColor="#f26a1b" /></linearGradient>
    </defs>
    <circle cx="15" cy="14" r="12.800" fill="url(#sun)" />
    <path d="M6.500 6.300h3M15 6.300h13.500M6.500 11.500h22M1.500 16.500h14M21 16.500h3.500M1.500 21.500h22" stroke="#85796e" strokeWidth="3" strokeLinecap="round" />
  </svg>
);

const WindowsLogo = () => (
  <svg width="30" height="30" viewBox="0 0 30 30">
    <defs>
      <linearGradient id="win" x1="0" y1="0" x2="1" y2="1"><stop offset="0" stopColor="#80dcff" /><stop offset="1" stopColor="#0a93fb" /></linearGradient>
    </defs>
    <path d="M.5 1.500A1 1 0 0 1 1.500.5h12.800v13.800H.5zM15.500.5h12.800a1 1 0 0 1 1 1v12.800H15.500zM.5 15.500h13.800v13.800H1.500a1 1 0 0 1-1-1zM15.500 15.500h13.800v12.800a1 1 0 0 1-1 1H15.500z" fill="url(#win)" />
  </svg>
);

const Ship = () => (
  <svg width="52" height="32" viewBox="0 0 52 32">
    <path d="M2 20q3-3 5 0M3 23l5 2M36 14l4-1M38 18l4-3" stroke="#3f9fb0" strokeWidth="2" fill="none" />
    <path d="M9 14q12 5 28 0l-4 11H13z" fill="#a5642c" />
    <path d="M12 17q10 4 23 1" stroke="#5f3415" strokeWidth="1.500" fill="none" />
    <path d="M7 26c5-6 9-5 12-1 4-5 8-4 13-3l8 3-6 5-14 2z" fill="#4fb1c0" />
    <path d="M8 7q4-3 7 0v9q-4-2-7 1zM16 6q6-3 10 0l1 11q-6-2-10 1zM27 8q5-3 7 0l2 8q-4-1-8 1zM18 3q3-2 7 0v3h-7z" fill="#ddd8d0" />
    <path d="M24 1v18M13 6v12M31 6v12M24 1l4 2h-4" stroke="#8b8176" strokeWidth="1" fill="none" />
    <path d="M29 25 39 17l13 2-9 8-13 2z" fill="#efe9dc" />
    <path d="m29 26 13 .5L52 19l-1 4-8 7-14-1z" fill="#cfc3a8" />
    <path d="M24 31h16l12-8" stroke="#4fb1c0" strokeWidth="1.500" fill="none" />
  </svg>
);

const TaskView = () => (
  <svg width="30" height="30" viewBox="0 0 30 30">
    <rect x="7.500" y="2" width="22.500" height="20" rx="1.500" fill="#f1f1f1" />
    <rect x="0" y="9" width="23" height="20" rx="1.500" fill="#6b6b6b" />
    <path d="M7.500 9H23v13H9a1.500 1.500 0 0 1-1.500-1.500z" fill="#acacac" />
  </svg>
);

const Copilot = () => (
  <svg width="28" height="28" viewBox="0 0 28 28">
    <defs>
      <linearGradient id="cpa" x1="0" y1="0" x2="0" y2="1"><stop offset="0" stopColor="#1b9cf2" /><stop offset=".5" stopColor="#2bc48a" /><stop offset="1" stopColor="#f5d60b" /></linearGradient>
      <linearGradient id="cpb" x1="0" y1="0" x2="0" y2="1"><stop offset="0" stopColor="#a14af0" /><stop offset=".5" stopColor="#f0559c" /><stop offset="1" stopColor="#fb9a4b" /></linearGradient>
    </defs>
    <path d="M8 1h10c2 0 3 1.500 3.500 3l1 3H17L12 8z" fill="#1c49d1" />
    <path d="M8.500 1H15c-2 1-2.500 3-3 5l-3.500 12c-.6 2-2 2.500-3.500 2.500H3C.5 20.500-.4 18 .3 15.500L4 4.500C4.700 2.300 6 1 8.500 1z" fill="url(#cpa)" />
    <path d="M20 27H10c-2 0-3-1.500-3.500-3l-1-3.500H11l5-.5z" fill="#f3612c" />
    <path d="M19.500 27H13c2-1 2.500-3 3-5l3.500-12c.6-2 2-2.500 3.500-2.500h2c2.500 0 3.400 2.500 2.700 5L24 23.500c-.7 2.200-2 3.500-4.500 3.500z" fill="url(#cpb)" />
  </svg>
);

const Teams = () => (
  <svg width="30" height="30" viewBox="0 0 30 30">
    <circle cx="25" cy="8" r="3.200" fill="#4e56cc" />
    <path d="M20 12h9a1 1 0 0 1 1 1v7c0 4-3 6-6 6h-4z" fill="#4e56cc" />
    <circle cx="16.500" cy="6.500" r="4.500" fill="#7b83eb" />
    <path d="M9 12h14.500v9a7.500 7.500 0 0 1-14.500 2z" fill="#7b83eb" />
    <rect y="7" width="15.500" height="15.500" rx="1.500" fill="#4b53bc" />
    <path d="M4 11h7.500M7.800 11v8" stroke="#fff" strokeWidth="1.900" />
  </svg>
);

const Explorer = () => (
  <svg width="30" height="30" viewBox="0 0 30 30">
    <path d="M0 3.500A1.500 1.500 0 0 1 1.500 2H10l3 3v4H0z" fill="#d99a13" />
    <path d="M0 7.500h10.500L13 5h15.500A1.500 1.500 0 0 1 30 6.500V27a1.500 1.500 0 0 1-1.500 1.500h-27A1.500 1.500 0 0 1 0 27z" fill="#fccb45" />
    <path d="M5 28.500V24a3 3 0 0 1 3-3h14a3 3 0 0 1 3 3v4.500z" fill="#1782d8" />
    <path d="M8.500 24.500h13" stroke="#0c5299" strokeWidth="1.200" />
  </svg>
);

const Edge = () => (
  <svg width="30" height="30" viewBox="0 0 30 30">
    <defs>
      <linearGradient id="edg" x1="0" y1="0" x2="1" y2=".3"><stop offset="0" stopColor="#1a9be0" /><stop offset=".6" stopColor="#35c6c6" /><stop offset="1" stopColor="#66eb6e" /></linearGradient>
    </defs>
    <circle cx="15" cy="15" r="15" fill="#0d5cab" />
    <path d="M.5 13C2 4 8 0 15 0c9 0 15 6 15 12.500 0 5-4 7.500-8 7.500-3 0-5-1-4.500-2.500 2-3.500-.5-7.500-5-7.500C7 10 2 11 .5 13z" fill="url(#edg)" />
    <path d="M17.500 17.500c-.5 1.500 1.500 2.500 4.500 2.500 3 0 5.500-1 8-4l-1.500 5.500c-6 2.500-12 1-12.500-3.500z" fill="#202122" />
    <circle cx="7" cy="22" r="7" fill="#0c2e49" />
    <path d="M6 17v10M9 18v8M4 22h7" stroke="#4cb2dd" strokeWidth="1" />
  </svg>
);

const Store = () => (
  <svg width="30" height="30" viewBox="0 0 30 30">
    <path d="M8.500 6V2.500A1.500 1.500 0 0 1 10 1h10a1.500 1.500 0 0 1 1.500 1.500V6" fill="none" stroke="#28afea" strokeWidth="2.200" />
    <path d="M.5 6h29v19a4 4 0 0 1-4 4h-21a4 4 0 0 1-4-4z" fill="#f3f3f3" />
    <path d="M9.500 11.500h5v5h-5z" fill="#f25022" /><path d="M15.500 11.500h5v5h-5z" fill="#7fba00" />
    <path d="M9.500 17.500h5v5h-5z" fill="#00a4ef" /><path d="M15.500 17.500h5v5h-5z" fill="#ffb900" />
  </svg>
);

const Armoury = () => (
  <svg width="28" height="30" viewBox="0 0 28 30">
    <path d="M14 1 26 7.500 25 21 14 29 2.500 22 1 7.500z" fill="#6f7880" />
    <path d="M14 1 26 7.500 17 9z" fill="#aab2b8" />
    <path d="M1 7.500 14 1l3 8L2.500 22z" fill="#88919a" />
    <path d="m14 6 9.500 14.500L9 22l-3.500-2z" fill="#23282d" />
    <path d="m14 6 1.500 12L23.500 20.500z" fill="#454d54" />
    <path d="M2.500 22 9 22l16-1-11 8z" fill="#4d555c" />
  </svg>
);

const MyAsus = () => (
  <svg width="30" height="30" viewBox="0 0 30 30">
    <defs>
      <linearGradient id="asus" x1="0" y1="1" x2="1" y2="0"><stop offset="0" stopColor="#5b1bff" /><stop offset=".5" stopColor="#2a6af8" /><stop offset="1" stopColor="#009dff" /></linearGradient>
    </defs>
    <rect width="30" height="30" fill="url(#asus)" />
    <path d="M4.500 21.500 10.500 8.500M11 21.500l6.500-13M17.500 17.500l4.500-9v13" stroke="#fff" strokeWidth="2.200" fill="none" />
  </svg>
);

const Chrome = () => (
  <svg width="30" height="30" viewBox="0 0 30 30">
    <circle cx="15" cy="15" r="15" fill="#fbc116" />
    <path d="M15 15 2 7.500A15 15 0 0 1 28 7.500H15z" fill="#e33b2e" />
    <path d="M2 7.500A15 15 0 0 0 15 30l6.500-11.300L8.500 18.700z" fill="#229342" />
    <path d="M15 7.500h13A15 15 0 0 1 15 30l6.500-11.300z" fill="#fbc116" />
    <circle cx="15" cy="15" r="7.300" fill="#fff" />
    <circle cx="15" cy="15" r="5.700" fill="#1a73e8" />
  </svg>
);

function WindowsBar() {
  return (
    <Taskbar>
      <Weather>
        <HazeIcon />
        <WeatherText>
          <Fit w={29.5}>85°F</Fit>
          <Condition><Fit w={33}>Haze</Fit></Condition>
        </WeatherText>
      </Weather>
      <TaskSlot><WindowsLogo /></TaskSlot>
      <SearchBox>
        <svg width="20" height="20" viewBox="0 0 20 20" fill="none" stroke="#e8e8e8" strokeWidth="2">
          <circle cx="8.500" cy="8.500" r="7" /><path d="m13.500 13.500 5 5.300" strokeLinecap="round" />
        </svg>
        <SearchLabel><Fit w={51}>Search</Fit></SearchLabel>
        <Ship />
      </SearchBox>
      {[TaskView, Copilot, Teams, Explorer, Edge, Store, Armoury, MyAsus].map((Icon, i) => (
        <TaskSlot key={i}><Icon /></TaskSlot>
      ))}
      <TaskSlot>
        <XboxTile><FaXbox size={26} color="#fff" /></XboxTile>
        <CountBadge>1</CountBadge>
      </TaskSlot>
      <TaskSlot>
        <ActiveApp>
          <Chrome />
          <AppBadge><AvatarS s={20} /></AppBadge>
        </ActiveApp>
      </TaskSlot>
      <Tray>
        <TrayItem $w={40}>
          <svg width="14" height="9" viewBox="0 0 14 9" fill="none" stroke="#fff" strokeWidth="1.700"><path d="m1 7.800 6-6 6 6" /></svg>
        </TrayItem>
        <TrayItem $w={40}>
          <svg width="20" height="14" viewBox="0 0 20 14">
            <path d="M5 6a5 5 0 0 1 10-1l-5 5z" fill="#8d8d8d" />
            <path d="M4.500 13a4.500 4.500 0 0 1 0-9c3 0 4 1 5.500 3l3 6z" fill="#b9b9b9" />
            <path d="M15.500 5a4.200 4.200 0 0 1 0 8.300H4.500c-2 0-3.500-1-4-2.300L11 7c1-1.300 2.500-2 4.500-2z" fill="#fff" />
          </svg>
        </TrayItem>
        <TrayItem $w={56}>
          <Fit w={29}>ENG</Fit>
          <Fit w={14}>IN</Fit>
        </TrayItem>
        <TrayItem $w={38}>
          <svg width="20" height="16" viewBox="0 0 20 16" fill="none" stroke="#fff" strokeWidth="1.500">
            <path d="M.8 6a13 13 0 0 1 18.400 0M3.800 9a8.800 8.800 0 0 1 12.400 0M6.600 11.800a4.800 4.800 0 0 1 6.800 0" />
            <circle cx="10" cy="14" r="1.500" fill="#fff" stroke="none" />
          </svg>
        </TrayItem>
        <TrayItem $w={22}>
          <svg width="20" height="18" viewBox="0 0 20 18" fill="none" stroke="#fff" strokeWidth="1.300">
            <path d="M1 6.200h3L8.500 2v14L4 11.800H1zM11.500 6a4.500 4.500 0 0 1 0 6M14 3.500a8 8 0 0 1 0 11M16.500 1.200a11.500 11.500 0 0 1 0 15.600" />
          </svg>
        </TrayItem>
        <TrayItem $w={38}>
          <svg width="20" height="17" viewBox="0 0 20 17" fill="none" stroke="#fff" strokeWidth="1.400">
            <path d="M7 4h8.500A1.800 1.800 0 0 1 17.300 5.800v7.400a1.800 1.800 0 0 1-1.800 1.800H3a1.800 1.800 0 0 1-1.800-1.800V11" />
            <path d="M8 6h7.300v7H3.500zM17.500 7.500H20v4h-2.500zM4.500 0 .5 6h2L1.500 10.500 6.500 4.500H4z" fill="#fff" stroke="none" />
          </svg>
        </TrayItem>
        <TrayItem $w={89} $align="flex-end">
          <Fit w={35}>13:33</Fit>
          <Fit w={77}>13-11-2024</Fit>
        </TrayItem>
        <TrayItem $w={30} $align="flex-end">
          <svg width="18" height="19" viewBox="0 0 18 19" fill="none" stroke="#fff" strokeWidth="1.500" strokeLinejoin="round">
            <path d="M9 1a6 6 0 0 0-6 6v4l-2 4.200h16L15 11V7a6 6 0 0 0-6-6zM7 16a2 2 0 0 0 4 0" />
          </svg>
        </TrayItem>
      </Tray>
    </Taskbar>
  );
}

export default function App() {
  return (
    <Page>
      <GlobalStyle />
      <Browser />
      <BuilderTop />
      <Workspace>
        <ToolboxPanel />
        <FlowCanvas />
      </Workspace>
      <WindowsBar />
    </Page>
  );
}
